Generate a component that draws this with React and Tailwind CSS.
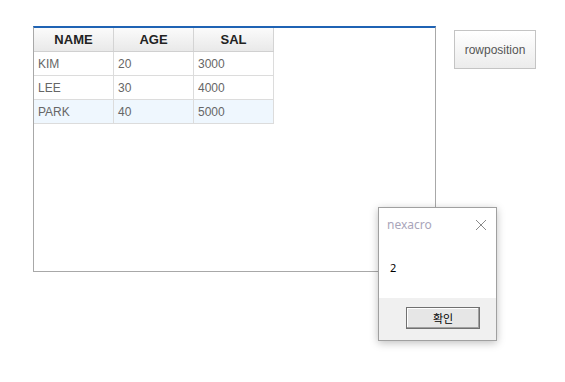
import React from "react";

const rows = [
  ["KIM", "20", "3000"],
  ["LEE", "30", "4000"],
  ["PARK", "40", "5000"],
];

export default function App() {
  return (
    <div className="relative w-[565px] h-[382px] bg-white overflow-hidden" style={{ fontFamily: '"Liberation Sans", Arial, sans-serif' }}>
      <div className="flex items-start pt-[26px] pl-[33px] gap-[18px]">
        <div className="w-[403px] h-[246px] border-t-2 border-t-[#1f63b4] border-x border-b border-[#a8a8a8] bg-white">
          <div className="flex w-[240px] h-[24px] border-b border-[#d0d0d0] bg-gradient-to-b from-[#fbfbfb] to-[#e9e9e9]">
            {["NAME", "AGE", "SAL"].map((h) => (
              <div key={h} className="w-[80px] flex items-center justify-center border-r border-[#d4d4d4] text-[13px] font-bold text-[#222]">
                {h}
              </div>
            ))}
          </div>
          {rows.map((r, i) => (
            <div key={i} className={`flex w-[240px] h-[24px] border-b border-[#dcdcdc] ${i === 2 ? "bg-[#eff7fe]" : "bg-white"}`}>
              {r.map((c, j) => (
                <div key={j} className="w-[80px] flex items-center pl-[4px] border-r border-[#dcdcdc] text-[12px] text-[#666]">
                  {c}
                </div>
              ))}
            </div>
          ))}
        </div>
        <div className="mt-[4px] w-[82px] h-[39px] border border-[#c4c4c4] bg-gradient-to-b from-[#ffffff] to-[#ececec] flex items-center justify-center text-[12px] text-[#555]">
          rowposition
        </div>
      </div>

      <div className="absolute left-[378px] top-[207px] w-[119px] h-[134px] border border-[#a0a0a0] bg-white shadow-[0_2px_8px_rgba(0,0,0,0.25)] flex flex-col" style={{ fontFamily: '"Noto Sans", "Noto Sans CJK KR", sans-serif' }}>
        <div className="flex items-center justify-between h-[31px] pl-[8px] pr-[9px] pt-[2px]">
          <span className="text-[12px] text-[#a9a5ba]">nexacro</span>
          <svg width="12" height="12" viewBox="0 0 12 12">
            <path d="M1 1 L11 11 M11 1 L1 11" stroke="#8a8a8a" strokeWidth="1" fill="none" />
          </svg>
        </div>
        <div className="h-[59px] pl-[11px] pt-[23px] text-[11px] text-black leading-none">2</div>
        <div className="flex-1 bg-[#f0f0f0] flex justify-start pl-[27px] pt-[9px]">
          <div className="w-[74px] h-[22px] border border-[#707070] bg-[#e6e6e6] shadow-[inset_-1px_-1px_0_#a0a0a0,inset_1px_1px_0_#fff] flex items-center justify-center text-[11px] text-black" style={{ fontFamily: '"Noto Sans CJK KR", sans-serif' }}>
            확인
          </div>
        </div>
      </div>
    </div>
  );
}
